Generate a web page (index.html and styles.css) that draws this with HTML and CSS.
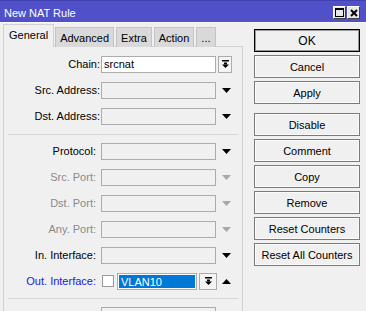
FILE: index.html
```html
<!DOCTYPE html>
<html>
<head>
<meta charset="utf-8">
<link rel="stylesheet" href="styles.css">
</head>
<body>
<div class="window">
  <div class="titlebar">
    <span class="title">New NAT Rule</span>
    <div class="winbtns">
      <span class="wb"><svg width="9" height="9" viewBox="0 0 9 9"><rect x="0.5" y="0.5" width="8" height="8" fill="none" stroke="#000"/><rect x="0" y="0" width="9" height="2" fill="#000"/></svg></span>
      <span class="wb"><svg width="8" height="8" viewBox="0 0 8 8"><path d="M1 1 L7 7 M7 1 L1 7" stroke="#000" stroke-width="2"/></svg></span>
    </div>
  </div>
  <div class="main">
    <div class="left">
      <div class="tabs">
        <div class="tab active">General</div>
        <div class="tab">Advanced</div>
        <div class="tab">Extra</div>
        <div class="tab">Action</div>
        <div class="tab">...</div>
      </div>
      <div class="panel">
        <div class="row g1">
          <span class="label">Chain:</span>
          <div class="field white">srcnat</div>
          <div class="ddbtn"><svg width="7" height="8" viewBox="0 0 7 8"><rect x="0" y="0" width="7" height="1.5" fill="#000"/><rect x="2" y="2.5" width="3" height="2" fill="#000"/><polygon points="0,4.5 7,4.5 3.5,8" fill="#000"/></svg></div>
        </div>
        <div class="row g1">
          <span class="label">Src. Address:</span>
          <div class="field"></div>
          <span class="arrow"><svg width="9" height="5" viewBox="0 0 9 5"><polygon points="0,0 9,0 4.5,5" fill="#000"/></svg></span>
        </div>
        <div class="row g1">
          <span class="label">Dst. Address:</span>
          <div class="field"></div>
          <span class="arrow"><svg width="9" height="5" viewBox="0 0 9 5"><polygon points="0,0 9,0 4.5,5" fill="#000"/></svg></span>
        </div>
        <div class="sep"></div>
        <div class="row g2">
          <span class="label">Protocol:</span>
          <div class="field"></div>
          <span class="arrow"><svg width="9" height="5" viewBox="0 0 9 5"><polygon points="0,0 9,0 4.5,5" fill="#000"/></svg></span>
        </div>
        <div class="row g2">
          <span class="label dis">Src. Port:</span>
          <div class="field"></div>
          <span class="arrow"><svg width="9" height="5" viewBox="0 0 9 5"><polygon points="0,0 9,0 4.5,5" fill="#a8a8a8"/></svg></span>
        </div>
        <div class="row g2">
          <span class="label dis">Dst. Port:</span>
          <div class="field"></div>
          <span class="arrow"><svg width="9" height="5" viewBox="0 0 9 5"><polygon points="0,0 9,0 4.5,5" fill="#a8a8a8"/></svg></span>
        </div>
        <div class="row g2">
          <span class="label dis">Any. Port:</span>
          <div class="field"></div>
          <span class="arrow"><svg width="9" height="5" viewBox="0 0 9 5"><polygon points="0,0 9,0 4.5,5" fill="#a8a8a8"/></svg></span>
        </div>
        <div class="row g2">
          <span class="label">In. Interface:</span>
          <div class="field"></div>
          <span class="arrow"><svg width="9" height="5" viewBox="0 0 9 5"><polygon points="0,0 9,0 4.5,5" fill="#000"/></svg></span>
        </div>
        <div class="row g2">
          <span class="label blue">Out. Interface:</span>
          <span class="check"></span>
          <div class="field sel"><span class="seltext">VLAN10</span></div>
          <div class="ddbtn wide"><svg width="7" height="8" viewBox="0 0 7 8"><rect x="0" y="0" width="7" height="1.5" fill="#000"/><rect x="2" y="2.5" width="3" height="2" fill="#000"/><polygon points="0,4.5 7,4.5 3.5,8" fill="#000"/></svg></div>
          <span class="arrow up"><svg width="9" height="5" viewBox="0 0 9 5"><polygon points="0,5 9,5 4.5,0" fill="#000"/></svg></span>
        </div>
        <div class="sep bottom"></div>
        <div class="row g2">
          <span class="label"></span>
          <div class="field"></div>
        </div>
      </div>
    </div>
    <div class="buttons">
      <div class="btn default">OK</div>
      <div class="btn">Cancel</div>
      <div class="btn">Apply</div>
      <div class="btn spaced">Disable</div>
      <div class="btn">Comment</div>
      <div class="btn">Copy</div>
      <div class="btn">Remove</div>
      <div class="btn">Reset Counters</div>
      <div class="btn">Reset All Counters</div>
    </div>
  </div>
</div>
</body>
</html>
```

FILE: styles.css
```css
html, body {
  margin: 0;
  padding: 0;
  background: #f0f0f0;
  font-family: "Liberation Sans", Arial, sans-serif;
  font-size: 11px;
  color: #000;
  overflow: hidden;
}
.window {
  width: 366px;
  height: 311px;
  overflow: hidden;
}
.titlebar {
  height: 22px;
  background: #5050c9;
  border-top: 1px solid #4040b0;
  box-sizing: border-box;
  display: flex;
  align-items: center;
  justify-content: space-between;
}
.title {
  color: #fff;
  font-size: 11px;
  padding-left: 4px;
  padding-top: 2px;
}
.winbtns {
  display: flex;
  gap: 1px;
  padding-right: 6px;
  padding-top: 2px;
}
.wb {
  width: 11px;
  height: 11px;
  background: #e8e8e8;
  border-top: 1px solid #fff;
  border-left: 1px solid #fff;
  border-right: 1px solid #404040;
  border-bottom: 1px solid #404040;
  display: flex;
  align-items: center;
  justify-content: center;
}
.main {
  display: flex;
  align-items: flex-start;
  border-top: 1px solid #fafafa;
}
.left {
  width: 243px;
  padding-left: 3px;
  box-sizing: border-box;
}
.tabs {
  display: flex;
  align-items: flex-end;
  height: 24px;
  margin-bottom: -1px;
  position: relative;
  z-index: 1;
}
.tab {
  height: 19px;
  line-height: 20px;
  padding: 0 4px;
  background: #d9d9d9;
  border: 1px solid #c4c4c4;
  border-bottom: none;
  margin-right: 2px;
  color: #000;
}
.tab.active {
  height: 22px;
  line-height: 20px;
  background: #f0f0f0;
  border-color: #d2d2d2;
  padding: 0 5px;
  margin-right: 1px;
}
.panel {
  border: 1px solid #d2d2d2;
  border-bottom: none;
  height: 300px;
  padding-top: 4px;
  box-sizing: border-box;
}
.row {
  display: flex;
  align-items: center;
  height: 26px;
}
.label {
  text-align: right;
  white-space: nowrap;
  box-sizing: border-box;
  width: 97px;
  padding-right: 1px;
}
.g2 .label {
  padding-right: 5px;
}
.label.dis { color: #8a8a8a; }
.label.blue { color: #1a1ae0; }
.field {
  width: 115px;
  height: 17px;
  border: 1px solid #acacac;
  box-sizing: border-box;
  background: #f0f0f0;
  line-height: 15px;
  padding-left: 2px;
  white-space: nowrap;
}
.field.white { background: #fff; }
.ddbtn {
  width: 14px;
  height: 17px;
  margin-left: 2px;
  border: 1px solid #acacac;
  box-sizing: border-box;
  background: #f4f4f4;
  display: flex;
  align-items: center;
  justify-content: center;
}
.ddbtn.wide { width: 18px; }
.arrow {
  display: flex;
  margin-left: 5px;
  height: 5px;
}
.row .field + .arrow { margin-left: 6px; }
.arrow.up { margin-left: 5px; }
.check {
  width: 12px;
  height: 12px;
  border: 1px solid #9a9a9a;
  background: #fff;
  box-sizing: border-box;
  margin-left: 1px;
  margin-right: 3px;
}
.field.sel {
  width: 80px;
  background: #fff;
  padding: 1px;
  line-height: 13px;
}
.seltext {
  display: block;
  height: 13px;
  background: #0078d7;
  color: #fff;
  padding-left: 2px;
  line-height: 14px;
}
.sep {
  height: 1px;
  background: #d6d6d6;
  margin: 5px 4px 3px 4px;
}
.sep.bottom {
  margin: 4px 4px 3px 4px;
}
.buttons {
  margin-left: 11px;
  padding-top: 6px;
  width: 106px;
  display: flex;
  flex-direction: column;
  gap: 3px;
}
.btn {
  height: 23px;
  box-sizing: border-box;
  border: 1px solid #7a7a7a;
  box-shadow: inset 0 0 0 1px #fbfbfb;
  background: #f0f0f0;
  display: flex;
  align-items: center;
  justify-content: center;
  white-space: nowrap;
}
.btn.default {
  border: 1px solid #000;
  box-shadow: inset 0 0 0 1px #9a9a9a;
  font-size: 12px;
}
.btn.spaced { margin-top: 6px; }
```
